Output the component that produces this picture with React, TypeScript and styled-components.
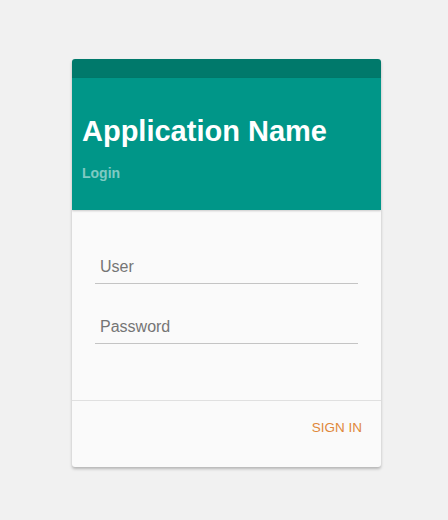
import React from 'react';
import styled, { createGlobalStyle } from 'styled-components';

const GlobalStyle = createGlobalStyle`
  html, body {
    margin: 0;
    padding: 0;
    background: #f1f1f1;
    font-family: 'Liberation Sans', Arial, sans-serif;
  }
`;

const Page = styled.div`
  width: 448px;
  height: 520px;
  display: flex;
  justify-content: center;
  padding-top: 59px;
  box-sizing: border-box;
`;

const Card = styled.div`
  width: 309px;
  height: 408px;
  margin-left: 5px;
  background: #fafafa;
  border-radius: 3px;
  overflow: hidden;
  box-shadow: 0 2px 3px rgba(0, 0, 0, 0.25);
  display: flex;
  flex-direction: column;
`;

const TopBar = styled.div`
  height: 19px;
  background: #00796b;
`;

const Header = styled.div`
  height: 132px;
  background: #009688;
  padding: 37px 10px 0;
  box-sizing: border-box;
  box-shadow: 0 1px 2px rgba(0, 0, 0, 0.2);
  position: relative;
  z-index: 1;
`;

const Title = styled.h1`
  margin: 0;
  font-size: 29px;
  font-weight: 700;
  line-height: 32px;
  color: #ffffff;
`;

const Subtitle = styled.div`
  margin-top: 18px;
  font-size: 14px;
  font-weight: 700;
  color: rgba(255, 255, 255, 0.5);
`;

const Body = styled.form`
  flex: 1;
  padding: 34px 23px 0;
  display: flex;
  flex-direction: column;
  gap: 20px;
  border-bottom: 1px solid #e0e0e0;
`;

const Field = styled.input`
  height: 40px;
  padding: 7px 5px 0;
  box-sizing: border-box;
  border: none;
  border-bottom: 1px solid #c4c4c4;
  background: transparent;
  font-family: 'Liberation Sans', Arial, sans-serif;
  font-size: 16px;
  color: #333;
  outline: none;

  &::placeholder {
    color: #757575;
  }
`;

const Footer = styled.div`
  height: 66px;
  display: flex;
  justify-content: flex-end;
  align-items: center;
  padding: 0 19px 14px;
  box-sizing: border-box;
`;

const SignInButton = styled.button`
  background: none;
  border: none;
  padding: 0;
  font-family: 'Liberation Sans', Arial, sans-serif;
  font-size: 13.5px;
  color: #e0883a;
  cursor: pointer;
  text-transform: uppercase;
`;

export default function App() {
  return (
    <>
      <GlobalStyle />
      <Page>
        <Card>
          <TopBar />
          <Header>
            <Title>Application Name</Title>
            <Subtitle>Login</Subtitle>
          </Header>
          <Body onSubmit={(e) => e.preventDefault()}>
            <Field type="text" placeholder="User" />
            <Field type="password" placeholder="Password" />
          </Body>
          <Footer>
            <SignInButton type="button">Sign in</SignInButton>
          </Footer>
        </Card>
      </Page>
    </>
  );
}
